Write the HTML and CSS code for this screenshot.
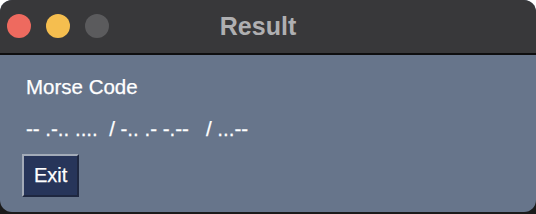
FILE: index.html
```html
<!DOCTYPE html>
<html lang="en">
<head>
  <meta charset="UTF-8">
  <meta name="viewport" content="width=device-width, initial-scale=1.0">
  <title>Result</title>
  <link rel="stylesheet" href="styles.css">
</head>
<body>
  <div class="window">
    <div class="title_bar">
      <div class="lights">
        <span class="light close"></span>
        <span class="light min"></span>
        <span class="light max"></span>
      </div>
      <h1 class="title">Result</h1>
    </div>
    <div class="content">
      <p class="label">Morse Code</p>
      <p class="morse">-- .-.. ....  / -.. .- -.--   / ...--</p>
      <button class="exit_btn" type="button">Exit</button>
    </div>
  </div>
</body>
</html>
```

FILE: styles.css
```css
html, body{
  margin: 0px;padding: 0px;
  width: 536px;height: 214px;
  overflow: hidden;
}
body{
  background: linear-gradient(#ffffff 0px, #ffffff 100px, #1b1b1b 100px);
  font-family: "Liberation Sans", Arial, sans-serif;
}
.window{
  width: 536px;height: 212px;
  border-radius: 12px;
  overflow: hidden;
  background-color: #67758b;
  display: flex;
  flex-direction: column;
}
.title_bar{
  height: 53px;
  flex: none;
  background-color: #38383a;
  border-bottom: 2px solid #0e0e0f;
  position: relative;
}
.lights{
  position: absolute;
  left: 7px; top: 14px;
  display: flex;
  gap: 15px;
}
.light{
  width: 24px;height: 24px;
  border-radius: 50%;
}
.close{background-color: #ee6a5f;}
.min{background-color: #f5be4f;}
.max{background-color: #5b5b5d;}
.title{
  margin: 0px;
  padding-right: 20px;
  text-align: center;
  line-height: 53px;
  font-size: 25px;
  font-weight: bold;
  color: #afafb1;
}
.content{
  padding: 20px 0px 0px 26px;
  color: #fff;
  -webkit-text-stroke: 0.25px #fff;
}
.label, .morse{
  margin: 0px;
  font-size: 20.5px;
  line-height: 24px;
}
.morse{
  margin-top: 18px;
  white-space: pre;
}
.exit_btn{
  margin: 13px 0px 0px -4px;
  padding: 7px 10px 8px 10px;
  font-family: inherit;
  font-size: 20px;
  line-height: 24px;
  color: #fff;
  -webkit-text-stroke: 0.25px #fff;
  background-color: #27355a;
  border: 2px solid;
  border-color: #a3abb8 #1e2740 #1e2740 #a3abb8;
}
```
